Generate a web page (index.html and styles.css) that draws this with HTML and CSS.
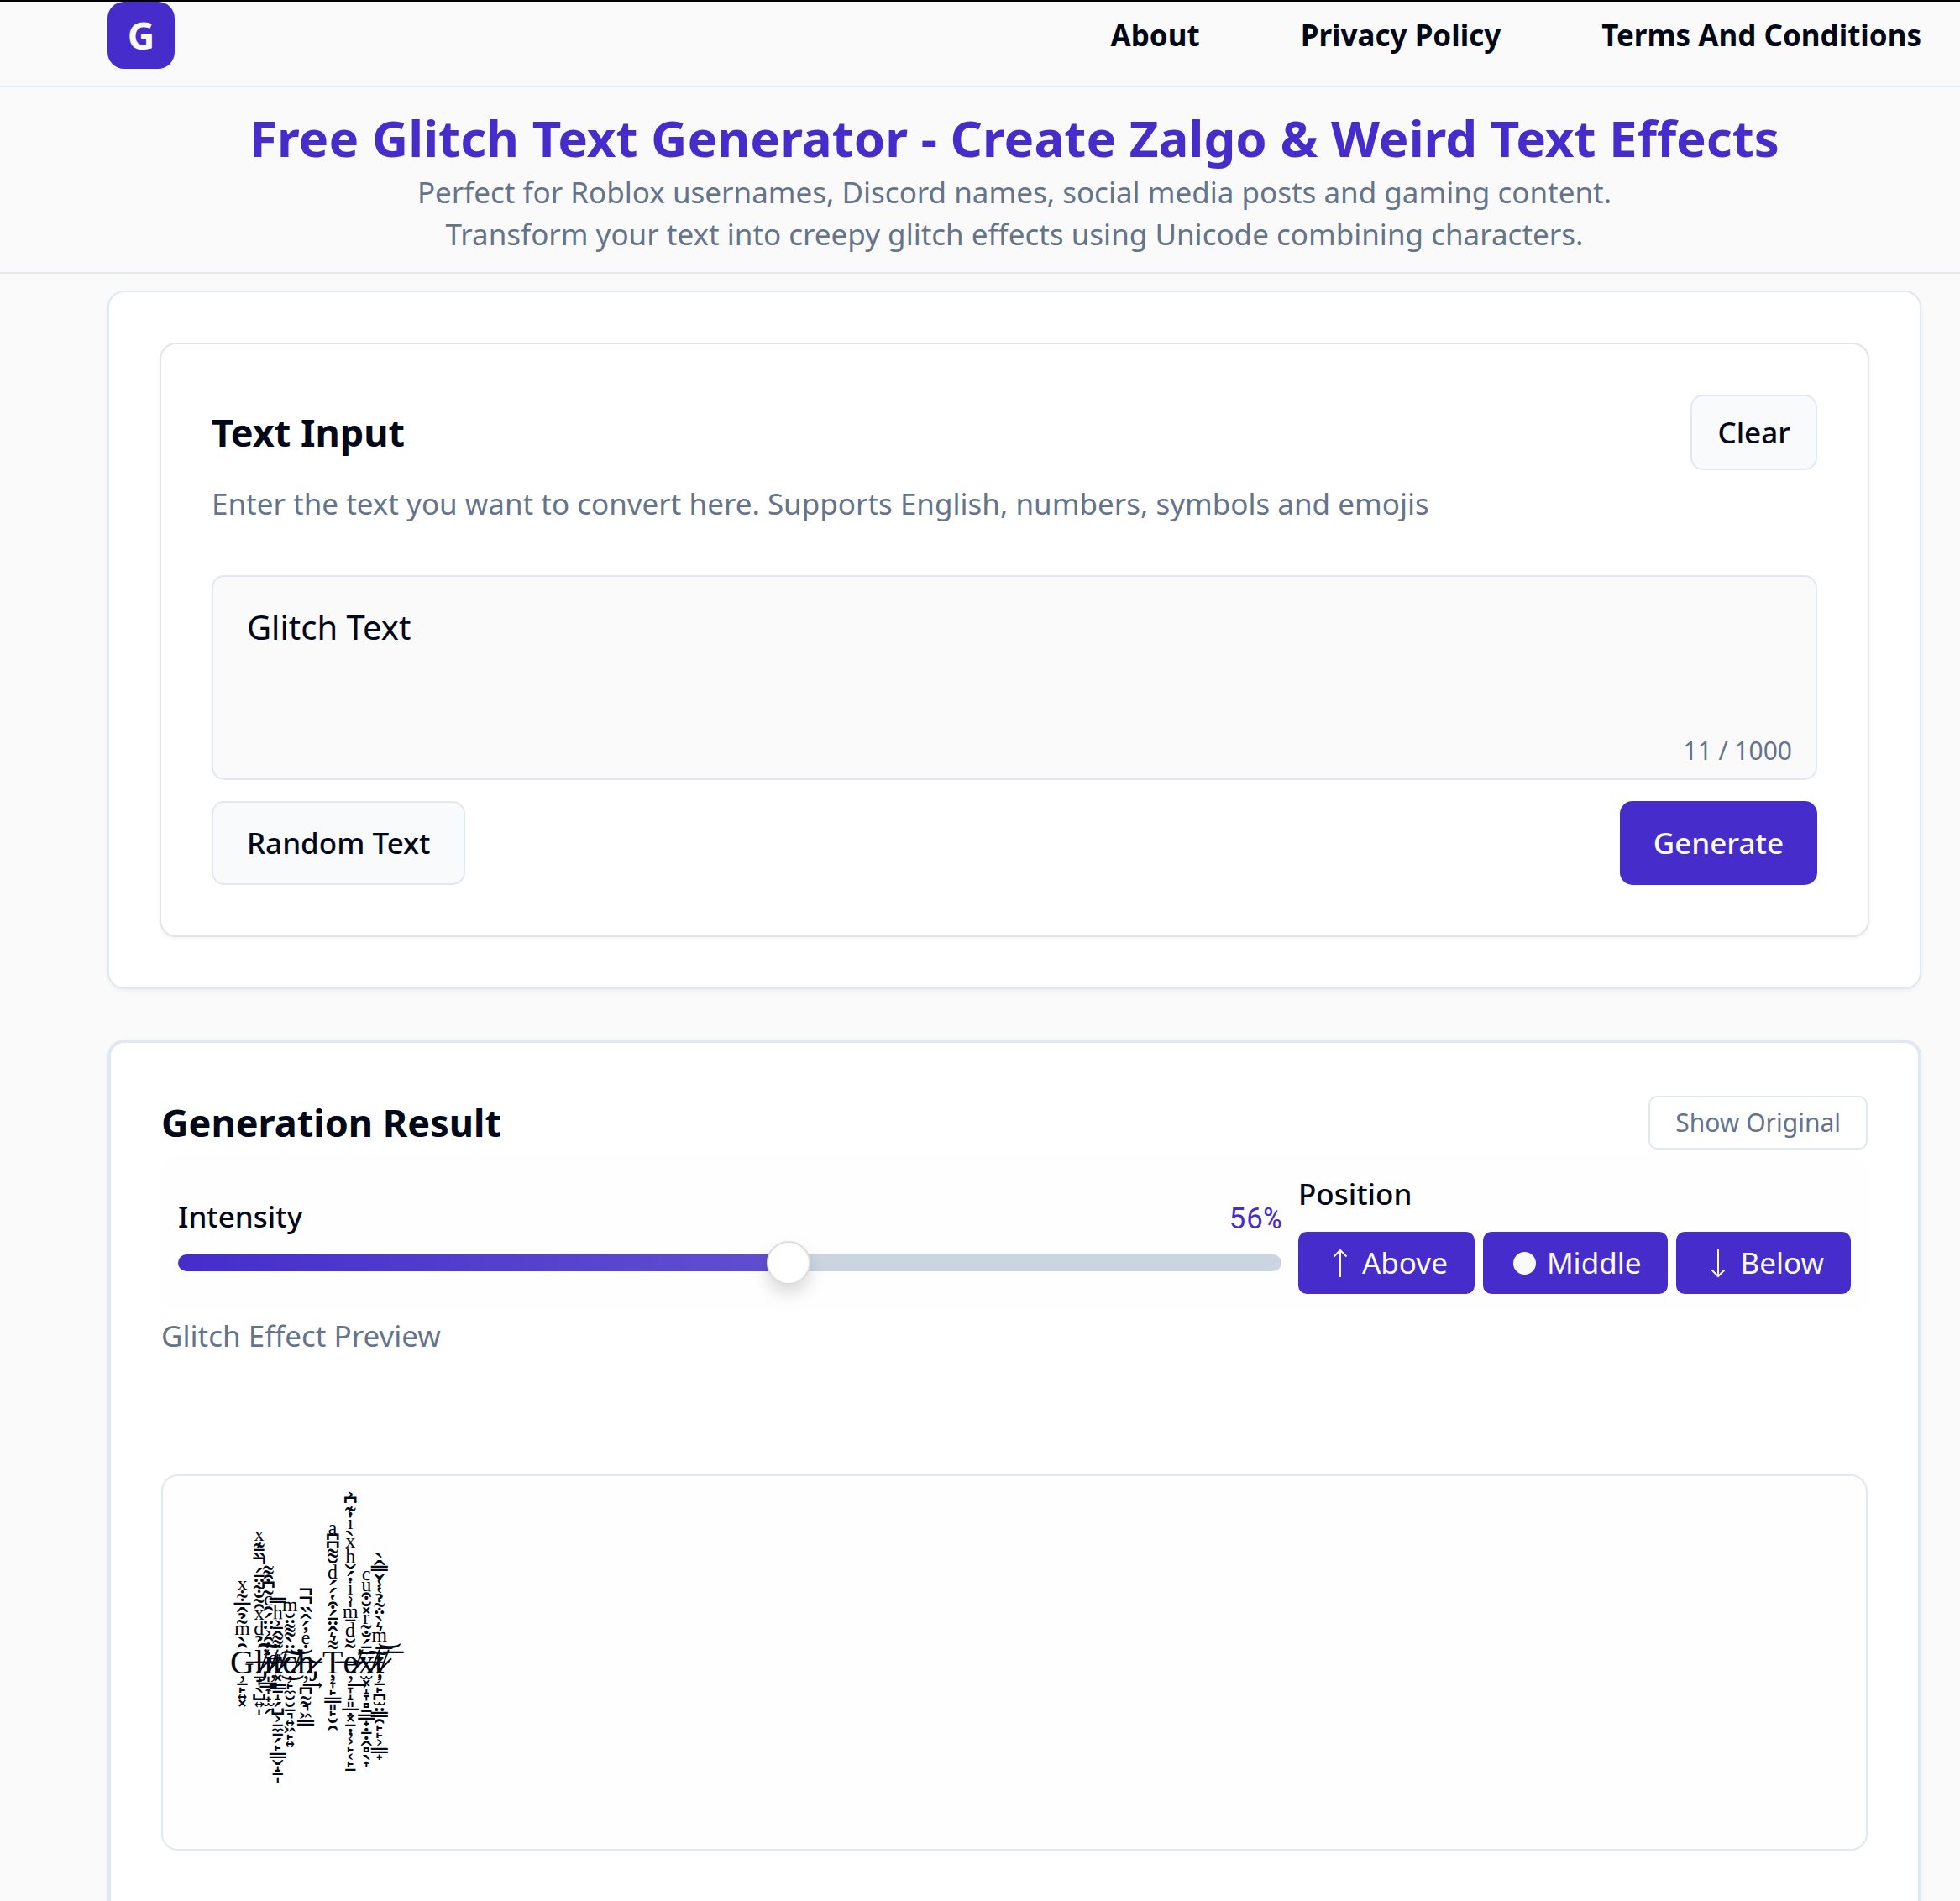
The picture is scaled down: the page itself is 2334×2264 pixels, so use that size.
FILE: index.html
```html
<!DOCTYPE html>
<html lang="en">
<head>
<meta charset="utf-8">
<title>Free Glitch Text Generator</title>
<link rel="stylesheet" href="styles.css">
</head>
<body>
<header class="topbar">
  <a class="logo" href="#" aria-label="Home">G</a>
  <nav class="nav">
    <a href="#">About</a>
    <a href="#">Privacy Policy</a>
    <a href="#">Terms And Conditions</a>
  </nav>
</header>
<section class="hero">
  <h1>Free Glitch Text Generator - Create Zalgo &amp; Weird Text Effects</h1>
  <p>Perfect for Roblox usernames, Discord names, social media posts and gaming content.<br>Transform your text into creepy glitch effects using Unicode combining characters.</p>
</section>
<main class="main">
  <section class="card">
    <div class="input-card">
      <div class="row">
        <h2><label for="source">Text Input</label></h2>
        <button class="btn btn-clear" type="button">Clear</button>
      </div>
      <p class="hint">Enter the text you want to convert here. Supports English, numbers, symbols and emojis</p>
      <div class="field">
        <textarea id="source">Glitch Text</textarea>
        <span class="counter">11 / 1000</span>
      </div>
      <div class="row actions">
        <button class="btn btn-large" type="button">Random Text</button>
        <button class="btn btn-large btn-primary" type="button">Generate</button>
      </div>
    </div>
  </section>
  <section class="card result">
    <div class="row">
      <h2>Generation Result</h2>
      <button class="btn-outline" type="button">Show Original</button>
    </div>
    <div class="controls">
      <div class="intensity">
        <div class="intensity-head">
          <label for="intensity">Intensity</label>
          <output for="intensity">56%</output>
        </div>
        <input id="intensity" type="range" min="1" max="100" value="56">
      </div>
      <div class="position">
        <span class="position-label">Position</span>
        <div class="position-buttons">
          <button class="toggle" type="button"><svg viewBox="2 0 34 36" aria-hidden="true"><path d="M20 35V3M12.500 10.500 20 3l7.500 7.500"/></svg>Above</button>
          <button class="toggle" type="button"><svg viewBox="2 0 34 36" aria-hidden="true"><circle cx="19.500" cy="18.500" r="13.500"/></svg>Middle</button>
          <button class="toggle" type="button"><svg viewBox="2 0 34 36" aria-hidden="true"><path d="M20 2v32M12.500 26.500 20 34l7.500-7.500"/></svg>Below</button>
        </div>
      </div>
    </div>
    <p class="caption">Glitch Effect Preview</p>
    <div class="output"><p class="zalgo" id="zalgo"></p></div>
  </section>
</main>
<script src="zalgo.js"></script>
</body>
</html>
```
FILE: zalgo.js
```js
// Each letter: base, overlay marks, marks stacked above (from the letter up),
// marks stacked below (from the letter down). Marks are hex code points.
const letters = [
  ['G', '336', '311 300 36b 303 309 302 305 34b 36f', '326 320 319 34d 353'],
  ['l', '336 338 337 321 360 315', '360 309 369 36f 311 303 306 34b 308 304 301 31a 30f 304 34a 36f', '320 31e 316 33a 34d 329'],
  ['i', '336 338 337 335 364 326', '313 311 350 308 308 301 311 368 303 346 352 34c', '329 333 34e 31f 32b 317'],
  ['t', '336 338 337 335 36e 35c 360', '303 34c 302 304 350 36a 33f', '353 333 320 31d 317 33a 355 320 33c 320 317 319 333 32c 31d 320 329'],
  ['c', '336 338 337 335 35d 315', '308 300 34c 303 308 306 36b', '326 319 33c 32e 32e 320 349 34d 356 319 34d'],
  ['h', '336 337 334 321', '307 364 313 301 302 30f 31a 31a', '326 362 32a 330 330 349 356 333'],
  [' ', '', '', ''],
  ['T', '336 335 326', '34c 35b 302 308 304 301 352 314 301 301 369 306 34c 346 346 363', '326 31e 319 333 348 319 32e 32f'],
  ['e', '336 338 337 315 334', '303 306 369 304 36b 30d 357 365 307 301 30c 36a 36f 300 365 307 34a 346 350', '326 362 31e 31d 348 332 323 353 320 323 326 355 319 354 319 320'],
  ['x', '336 338 337 335 305 360', '304 301 310 303 36c 33d 306 352 367 368', '32b 353 31d 31e 33b 320 333 31f 323 320 323 32d 33b 316 34e'],
  ['t', '338 337 305 35e 326', '35d 36b 35b 300 308 34b 309 314 33e 30c 33f 302 300', '326 320 319 32a 32b 324 333 32f 319 319 355 333 31f'],
];

// Vertical room that each mark takes in its stack, in pixels.
const rooms = {
  4: '304', 5: '307 320 332 323 324', 6: '303 308 330 33c 32b 362',
  7: '311 30d 305 329', 11: '34b 35b', 10: '31a 352 310', 13: '363 364 367 368 36b 36c 36e 36f',
  16: '365', 18: '369 36a', 9: '300 301 34c 346 33e 319 353 316 317 33a 34e 33b 32a 355 349',
};
const room = {};
for (const [px, marks] of Object.entries(rooms)) marks.split(' ').forEach(m => room[m] = px);

const small = /^36[3-9a-f]$/;
const high = /^(300|301|309)$/;
const bar = /^(305|33f)$/;
const char = m => String.fromCharCode(parseInt(m, 16));
const list = s => s ? s.split(' ') : [];
const kind = m => small.test(m) ? 'small' : high.test(m) ? 'high' : bar.test(m) ? 'bar' : m === '303' ? 'tilde' : '';
const cell = m => `<i class="mark ${kind(m)}" style="height:${room[m] || 8}px"><b>\u00a0${char(m)}</b></i>`;

document.getElementById('zalgo').innerHTML = letters.map(([base, over, up, down]) =>
  `<span class="letter">${base === ' ' ? '\u00a0' : base}${list(over).map(char).join('')}` +
  `<span class="stack up">${list(up).map(cell).join('')}</span>` +
  `<span class="stack down">${list(down).map(cell).join('')}</span></span>`).join('');
```
FILE: styles.css
```css
* { box-sizing: border-box; }
body {
  margin: 0;
  border-top: 2px solid #000;
  background: #fafafa;
  color: #020817;
  font: 35px/50px "Noto Sans", sans-serif;
}
h1, h2, p { margin: 0; }
button, textarea { font: inherit; color: inherit; }
.topbar {
  display: flex;
  align-items: center;
  justify-content: space-between;
  padding: 0 46px 20px 128px;
  border-bottom: 2px solid #e2e8f0;
}
.logo {
  width: 80px;
  height: 80px;
  border-radius: 20px;
  background: #462dcb;
  color: #fafafa;
  font-size: 45px;
  font-weight: 700;
  line-height: 80px;
  text-align: center;
  text-decoration: none;
}
.nav { display: flex; gap: 120px; }
.nav a { color: inherit; font-weight: 700; text-decoration: none; }
.hero {
  padding: 20px 46px 20px 128px;
  border-bottom: 2px solid #e2e8f0;
  color: #64748b;
  text-align: center;
}
h1 { color: #462dcb; font-size: 60px; font-weight: 700; line-height: 80px; }
h2 { font-size: 45px; font-weight: 700; line-height: 70px; }
.main {
  display: flex;
  flex-direction: column;
  gap: 60px;
  padding: 20px 46px 0 128px;
}
.card {
  padding: 60px;
  border: 2px solid #e2e8f0;
  border-radius: 20px;
  background: #fff;
  box-shadow: 0 2px 5px rgba(0, 0, 0, .05);
}
.input-card {
  padding: 60px;
  border: 2px solid #e4e4e7;
  border-radius: 20px;
  background: #fff;
  box-shadow: 0 2px 5px rgba(0, 0, 0, .05);
}
.row { display: flex; align-items: center; justify-content: space-between; }
.btn {
  border: 2px solid #e2e8f0;
  border-radius: 15px;
  background: #f8fafc;
  font-weight: 500;
}
.btn-clear { padding: 18px 30px; }
.hint { margin-top: 15px; color: #64748b; }
.field { position: relative; display: flex; margin-top: 60px; }
textarea {
  flex: 1;
  height: 244px;
  padding: 30px 40px;
  border: 2px solid #e2e8f0;
  border-radius: 15px;
  background: #fafafa;
  font-size: 40px;
  line-height: 60px;
  resize: none;
}
.counter {
  position: absolute;
  right: 30px;
  bottom: 15px;
  color: #64748b;
  font-size: 30px;
  line-height: 40px;
}
.actions { margin-top: 25px; }
.btn-large { padding: 23px 40px; }
.btn-primary { padding: 25px 40px; border: 0; background: #462dcb; color: #fafafa; }
.result {
  padding-bottom: 120px;
  border-width: 4px;
}
.btn-outline {
  padding: 10px 30px;
  border: 2px solid #e2e8f0;
  border-radius: 10px;
  background: #fff;
  color: #64748b;
  font-size: 30px;
  line-height: 40px;
}
.controls {
  display: flex;
  align-items: center;
  gap: 20px;
  margin-top: 5px;
  padding: 20px;
  border-radius: 20px;
  background: #fefefe;
}
.intensity { flex: 1; }
.intensity-head { display: flex; justify-content: space-between; margin-bottom: 20px; font-weight: 500; }
output { color: #462dcb; font-family: "Roboto Mono", monospace; font-weight: 400; }
input[type=range] {
  -webkit-appearance: none;
  appearance: none;
  display: block;
  width: 100%;
  height: 20px;
  margin: 0;
  border-radius: 10px;
  background: linear-gradient(90deg, #462dcb, #6150d0 56%, #cbd5e1 56%);
}
input[type=range]::-webkit-slider-thumb {
  -webkit-appearance: none;
  width: 52px;
  height: 52px;
  border: 2px solid #ddd;
  border-radius: 50%;
  background: #fff;
  box-shadow: 0 10px 20px rgba(0, 0, 0, .15);
}
.position { display: flex; flex-direction: column; gap: 20px; }
.position-label { font-weight: 500; }
.position-buttons { display: flex; gap: 10px; }
.toggle {
  display: flex;
  align-items: center;
  gap: 10px;
  padding: 10px 30px;
  border: 2px solid #462dcb;
  border-radius: 10px;
  background: #462dcb;
  color: #fafafa;
}
.toggle svg { width: 34px; height: 36px; fill: none; stroke: #fafafa; stroke-width: 2; }
.toggle circle { fill: #fafafa; stroke: none; }
.caption { margin-top: 5px; color: #64748b; }
.output {
  display: flex;
  align-items: center;
  min-height: 448px;
  margin-top: 140px;
  padding: 0 80px;
  border: 2px solid #e2e8f0;
  border-radius: 20px;
  background: #fefefe;
}
.zalgo { display: flex; font: 40px/60px "Liberation Serif", serif; }
.letter { position: relative; }
.stack { position: absolute; left: 50%; display: flex; width: 0; }
.up { bottom: 46px; flex-direction: column-reverse; }
.down { top: 47px; flex-direction: column; }
.mark {
  display: flex;
  justify-content: flex-end;
  width: 0;
  font-style: normal;
  line-height: 0;
  white-space: nowrap;
}
.mark b { font-weight: 400; }
.up .mark { align-items: flex-end; }
.up b { margin-bottom: -8px; }
.up .high b { margin: 0 -5px -15px 0; }
.up .bar b { margin-bottom: -14px; }
.up .small b { margin-bottom: 3px; }
.up .tilde b { margin-right: 7px; }
.down .mark { align-items: flex-start; }
.down b { margin-top: -16px; }
```
